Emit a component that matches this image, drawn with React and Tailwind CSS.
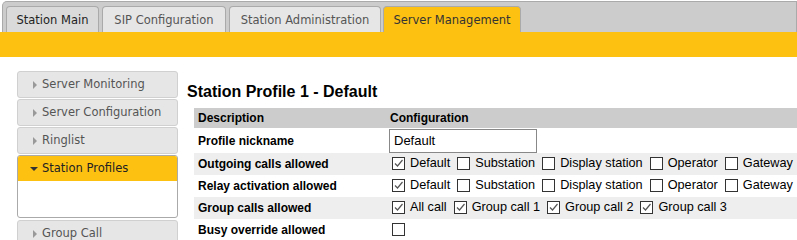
import React from "react";

const Check = ({ checked }) => (
  <span className="inline-flex w-[13px] h-[13px] border border-[#333] bg-white items-center justify-center shrink-0">
    {checked && (
      <svg width="11" height="11" viewBox="0 0 11 11">
        <path d="M2 5.5 L4.5 8 L9.5 2" fill="none" stroke="#555" strokeWidth="1.2" />
      </svg>
    )}
  </span>
);

const Opt = ({ checked, label }) => (
  <span className="inline-flex items-center mr-[7px]">
    <Check checked={checked} />
    <span className="ml-[5px]">{label}</span>
  </span>
);

const Tri = ({ open }) =>
  open ? (
    <svg width="8" height="8" viewBox="0 0 8 8" className="mr-[4px] shrink-0">
      <path d="M0 2 L8 2 L4 6 Z" fill="#333" />
    </svg>
  ) : (
    <svg width="6" height="8" viewBox="0 0 6 8" className="mr-[4px] shrink-0">
      <path d="M1 0 L5 4 L1 8 Z" fill="#999" />
    </svg>
  );

const SideItem = ({ label, extra = "" }) => (
  <div className={`h-[27px] border border-[#d0d0d0] rounded-[3px] bg-[#e6e6e6] flex items-center pl-[14px] pt-[1px] text-[11.5px] text-[#555] whitespace-nowrap ${extra}`}>
    <Tri />
    <span>{label}</span>
  </div>
);

export default function App() {
  const rows = [
    { label: "Outgoing calls allowed", opts: [[1, "Default"], [0, "Substation"], [0, "Display station"], [0, "Operator"], [0, "Gateway"]], bg: "bg-[#eeeeee]", h: "h-[22px]" },
    { label: "Relay activation allowed", opts: [[1, "Default"], [0, "Substation"], [0, "Display station"], [0, "Operator"], [0, "Gateway"]], bg: "bg-white", h: "h-[22px]" },
    { label: "Group calls allowed", opts: [[1, "All call"], [1, "Group call 1"], [1, "Group call 2"], [1, "Group call 3"]], bg: "bg-[#eeeeee]", h: "h-[22px]" },
    { label: "Busy override allowed", opts: [[0, ""]], bg: "bg-white", h: "h-[21px]" },
  ];
  return (
    <div className="w-[797px] h-[240px] overflow-hidden bg-white" style={{ fontFamily: "'DejaVu Sans', Verdana, sans-serif" }}>
      <div className="ml-[2px] mt-[1px] h-[31px] border border-b-0 border-[#aaa] rounded-tl-[5px] bg-[#cccccc] flex items-end pl-[3px] gap-[3px] text-[11.5px]">
        <div className="h-[26px] w-[93px] shrink-0 flex items-center justify-center pt-[2px] border border-b-0 border-[#aaa] rounded-t-[4px] bg-[#dadada] text-[#222]">Station Main</div>
        <div className="h-[26px] w-[124px] shrink-0 flex items-center justify-center pt-[2px] border border-b-0 border-[#aaa] rounded-t-[4px] bg-[#e6e6e6] text-[#555]">SIP Configuration</div>
        <div className="h-[26px] w-[152px] shrink-0 flex items-center justify-center pt-[2px] border border-b-0 border-[#aaa] rounded-t-[4px] bg-[#e6e6e6] text-[#555]">Station Administration</div>
        <div className="h-[26px] w-[138px] shrink-0 -ml-[1px] flex items-center justify-center pt-[2px] border border-b-0 border-[#aaa] rounded-t-[4px] bg-[#fdc112] text-[#333]">Server Management</div>
      </div>
      <div className="h-[25px] bg-[#fdc112]" />
      <div className="flex">
        <div className="ml-[17px] mt-[14px] w-[161px] shrink-0 flex flex-col gap-[1px]">
          <SideItem label="Server Monitoring" />
          <SideItem label="Server Configuration" />
          <SideItem label="Ringlist" />
          <div className="h-[63px] border border-[#aaa] rounded-[3px] bg-white overflow-hidden">
            <div className="h-[25px] bg-[#fdc112] flex items-center pl-[12px] pt-[1px] text-[11.5px] text-[#222] whitespace-nowrap">
              <Tri open />
              <span>Station Profiles</span>
            </div>
          </div>
          <SideItem label="Group Call" extra="mt-[1px]" />
        </div>
        <div className="ml-[9px] mt-[25px] min-w-0" style={{ fontFamily: "'Liberation Sans', Arial, sans-serif" }}>
          <div className="text-[16px] font-bold text-black leading-[20px]">Station Profile 1 - Default</div>
          <div className="ml-[7px] mt-[6px] text-[12px] w-[620px]">
            <div className="h-[20px] bg-[#cccccc] flex items-center font-bold text-black">
              <div className="w-[195px] shrink-0 pl-[4px]">Description</div>
              <div className="pl-[1px]">Configuration</div>
            </div>
            <div className="h-[25px] bg-white flex items-center font-bold text-black">
              <div className="w-[195px] shrink-0 pl-[4px]">Profile nickname</div>
              <div className="w-[148px] h-[24px] border border-[#888] flex items-center pl-[4px] text-[13px] font-normal">Default</div>
            </div>
            {rows.map((r) => (
              <div key={r.label} className={`${r.h} ${r.bg} flex items-center text-black`}>
                <div className="w-[195px] shrink-0 pl-[4px] font-bold">{r.label}</div>
                <div className="pl-[3px] flex items-center text-[12.7px] whitespace-nowrap">
                  {r.opts.map(([c, l], i) =>
                    l ? <Opt key={i} checked={!!c} label={l} /> : <Check key={i} checked={!!c} />
                  )}
                </div>
              </div>
            ))}
            <div className="h-[3px] bg-[#cccccc]" />
          </div>
        </div>
      </div>
    </div>
  );
}
